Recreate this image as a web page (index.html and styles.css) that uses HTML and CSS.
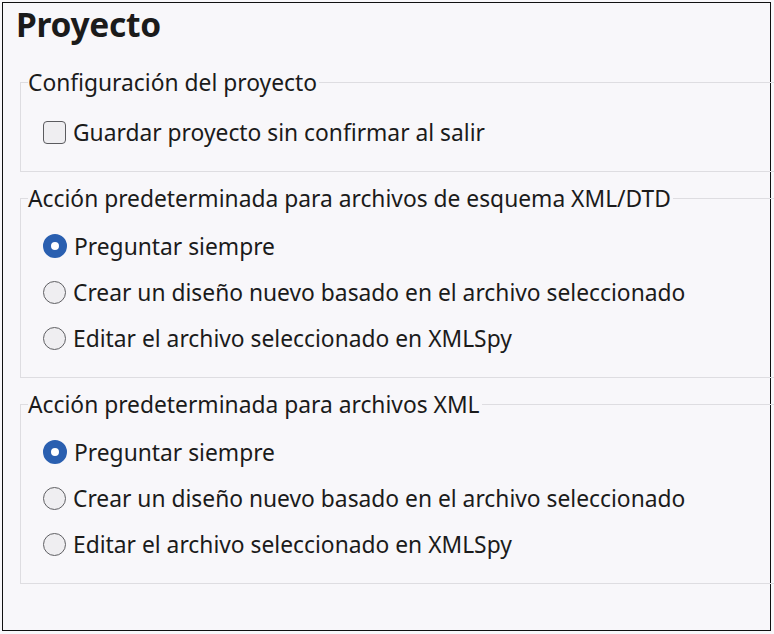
FILE: index.html
```html
<!DOCTYPE html>
<html lang="es">
<head>
<meta charset="utf-8">
<title>Proyecto</title>
<link rel="stylesheet" href="styles.css">
</head>
<body>
<div class="frame">
  <h1 class="title">Proyecto</h1>

  <fieldset class="group group-first">
    <legend class="legend">Configuración del proyecto</legend>
    <div class="row"><span class="check"></span><span class="label">Guardar proyecto sin confirmar al salir</span></div>
  </fieldset>

  <fieldset class="group">
    <legend class="legend">Acción predeterminada para archivos de esquema XML/DTD</legend>
    <div class="row"><span class="radio radio-on"></span><span class="label">Preguntar siempre</span></div>
    <div class="row"><span class="radio"></span><span class="label">Crear un diseño nuevo basado en el archivo seleccionado</span></div>
    <div class="row"><span class="radio"></span><span class="label">Editar el archivo seleccionado en XMLSpy</span></div>
  </fieldset>

  <fieldset class="group">
    <legend class="legend">Acción predeterminada para archivos XML</legend>
    <div class="row"><span class="radio radio-on"></span><span class="label">Preguntar siempre</span></div>
    <div class="row"><span class="radio"></span><span class="label">Crear un diseño nuevo basado en el archivo seleccionado</span></div>
    <div class="row"><span class="radio"></span><span class="label">Editar el archivo seleccionado en XMLSpy</span></div>
  </fieldset>
</div>
</body>
</html>
```

FILE: styles.css
```css
html, body {
  margin: 0;
  padding: 0;
  background: #f8f7fa;
  overflow: hidden;
}

body {
  font-family: "Noto Sans", "Open Sans", sans-serif;
  color: #1b1b1b;
}

.frame {
  margin: 2px 0 0 2px;
  width: 767px;
  height: 627px;
  border: 1px solid #111;
  background: #f8f7fa;
}

.title {
  margin: 0;
  padding: 0 0 0 13px;
  font-size: 33.5px;
  line-height: 42px;
  font-weight: 700;
  letter-spacing: -0.3px;
}

.group {
  margin: 22px -4px 0 17px;
  padding: 0 0 16px 0;
  border: 1px solid #dedde1;
  border-right: none;
  min-width: 0;
}

.group + .group {
  margin-top: 11px;
}

.legend {
  margin-left: 7px;
  padding: 1px 2px 0 0;
  font-size: 22.8px;
  line-height: 29px;
}

.row {
  display: flex;
  align-items: center;
  gap: 7px;
  height: 46px;
  padding-left: 22px;
  font-size: 22.8px;
}

.row:first-of-type {
  margin-top: 10px;
}

.group-first .row:first-of-type {
  margin-top: 12px;
}

.check {
  width: 21px;
  height: 21px;
  border: 1.5px solid #5b5b5f;
  border-radius: 4px;
  background: #efeef1;
  flex: none;
}

.radio {
  width: 21px;
  height: 21px;
  border: 1.5px solid #5f5f63;
  border-radius: 50%;
  background: #efeef1;
  flex: none;
}

.radio-on {
  width: 8px;
  height: 8px;
  border: 8px solid #2a5fb0;
  background: #ffffff;
}

.label {
  white-space: nowrap;
}
```
